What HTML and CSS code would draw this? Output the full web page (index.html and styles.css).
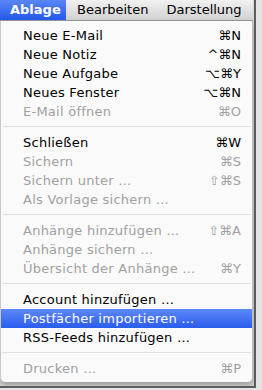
FILE: index.html
```html
<!DOCTYPE html>
<html lang="de">
<head>
    <meta charset="UTF-8">
    <meta name="viewport" content="width=device-width, initial-scale=1.0">
    <title>Ablage Menü</title>
    <link rel="stylesheet" href="styles.css">
</head>
<body>

    <div class="frame">
        <nav class="menubar">
            <span class="menu-title active">Ablage</span>
            <span class="menu-title">Bearbeiten</span>
            <span class="menu-title">Darstellung</span>
        </nav>

        <div class="menu">
            <ul class="group">
                <li class="item"><span>Neue E-Mail</span><span class="key">⌘N</span></li>
                <li class="item"><span>Neue Notiz</span><span class="key">^⌘N</span></li>
                <li class="item"><span>Neue Aufgabe</span><span class="key">⌥⌘Y</span></li>
                <li class="item"><span>Neues Fenster</span><span class="key">⌥⌘N</span></li>
                <li class="item disabled"><span>E-Mail öffnen</span><span class="key">⌘O</span></li>
            </ul>
            <hr class="sep">
            <ul class="group">
                <li class="item"><span>Schließen</span><span class="key">⌘W</span></li>
                <li class="item disabled"><span>Sichern</span><span class="key">⌘S</span></li>
                <li class="item disabled"><span>Sichern unter …</span><span class="key">⇧⌘S</span></li>
                <li class="item disabled"><span>Als Vorlage sichern …</span></li>
            </ul>
            <hr class="sep">
            <ul class="group">
                <li class="item disabled"><span>Anhänge hinzufügen …</span><span class="key">⇧⌘A</span></li>
                <li class="item disabled"><span>Anhänge sichern …</span></li>
                <li class="item disabled"><span>Übersicht der Anhänge …</span><span class="key">⌘Y</span></li>
            </ul>
            <hr class="sep">
            <ul class="group">
                <li class="item"><span>Account hinzufügen …</span></li>
                <li class="item selected"><span>Postfächer importieren …</span></li>
                <li class="item"><span>RSS-Feeds hinzufügen …</span></li>
            </ul>
            <hr class="sep">
            <ul class="group">
                <li class="item disabled"><span>Drucken …</span><span class="key">⌘P</span></li>
            </ul>
        </div>
    </div>

</body>
</html>
```

FILE: styles.css
```css
body {
    margin: 0;
    padding: 0;
    background-color: #e4e4e4;
    font-family: "DejaVu Sans", Verdana, sans-serif;
    font-size: 13px;
    color: #000;
}
.frame {
    width: 256px;
    height: 388px;
    background-color: #d6d6d6;
    border-right: 2px solid #5c5c5c;
    border-bottom: 2px solid #5c5c5c;
    box-sizing: border-box;
    overflow: hidden;
}
.menubar {
    display: flex;
    gap: 18px;
    height: 21px;
    width: 253px;
    background: linear-gradient(#f1f1f1, #d2d2d2);
    border-bottom: 1px solid #9a9a9a;
    box-sizing: border-box;
}
.menu-title {
    line-height: 20px;
}
.menu-title.active {
    width: 66px;
    padding-left: 10px;
    margin-right: -7px;
    box-sizing: border-box;
    color: white;
    font-weight: 600;
    background: linear-gradient(#5a86f6, #2457ec);
}
.menu {
    width: 253px;
    background-color: rgba(250, 250, 250, 0.98);
    border-left: 1px solid #c8c8c8;
    border-right: 1px solid #bdbdbd;
    border-radius: 0 0 5px 5px;
    box-shadow: 0 3px 6px rgba(0, 0, 0, 0.3);
    box-sizing: border-box;
    padding: 5px 0 4px;
}
.group {
    list-style: none;
    margin: 0;
    padding: 0;
}
.item {
    display: flex;
    justify-content: space-between;
    height: 19px;
    line-height: 19px;
    padding: 0 11px 0 22px;
    letter-spacing: 0.25px;
}
.item.disabled {
    color: #a0a0a0;
}
.item.selected {
    color: white;
    background: linear-gradient(#5d89f7, #2a5cee);
}
.key {
    letter-spacing: 0;
}
.sep {
    border: none;
    border-top: 1px solid #e0e0e0;
    margin: 5px 1px 6px;
}
```
